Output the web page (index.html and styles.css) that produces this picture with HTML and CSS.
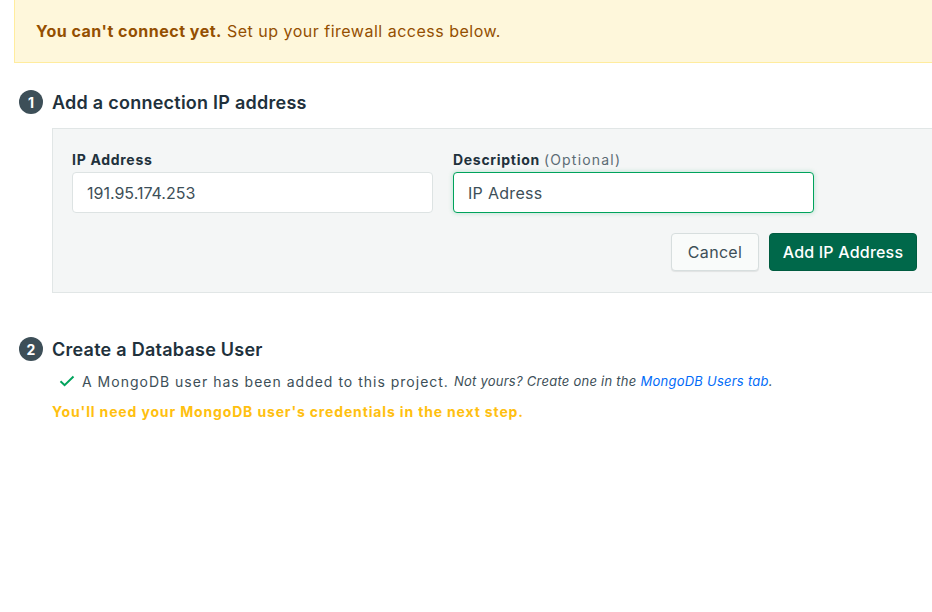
FILE: index.html
```html
<!DOCTYPE html>
<html>
<head>
<meta charset="utf-8">
<link rel="stylesheet" href="styles.css">
</head>
<body>
<div class="page">
  <div class="banner"><strong>You can't connect yet.</strong>&nbsp;Set up your firewall access below.</div>

  <section class="step step-one">
    <h2 class="step-title"><span class="num">1</span>Add a connection IP address</h2>
    <div class="panel">
      <div class="fields">
        <div class="field">
          <label class="label">IP Address</label>
          <div class="input">191.95.174.253</div>
        </div>
        <div class="field">
          <label class="label">Description <span class="opt">(Optional)</span></label>
          <div class="input focused">IP Adress</div>
        </div>
      </div>
      <div class="actions">
        <button class="btn btn-cancel">Cancel</button>
        <button class="btn btn-primary">Add IP Address</button>
      </div>
    </div>
  </section>

  <section class="step step-two">
    <h2 class="step-title"><span class="num">2</span>Create a Database User</h2>
    <p class="check-line">
      <svg class="check" width="16" height="12" viewBox="0 0 16 12"><path d="M1.5 6.2 L5.6 10.2 L14.5 1.5" fill="none" stroke="#00A35C" stroke-width="2"/></svg>
      <span class="check-text">A MongoDB user has been added to this project.</span>
      <em>Not yours? Create one in the <a class="link">MongoDB Users tab</a>.</em>
    </p>
    <p class="warn">You'll need your MongoDB user's credentials in the next step.</p>
  </section>
</div>
</body>
</html>
```

FILE: styles.css
```css
html, body {
  margin: 0;
  padding: 0;
  background: #fff;
  overflow: hidden;
}
body {
  font-family: "Inter", "Noto Sans", sans-serif;
  color: #21313C;
  width: 932px;
  height: 612px;
}
.page {
  width: 960px;
}
.banner {
  margin-left: 14px;
  height: 63px;
  box-sizing: border-box;
  padding: 0 20px 1px 21px;
  display: flex;
  align-items: center;
  background: #FEF7DB;
  border-left: 1px solid #FFEC9E;
  border-bottom: 1px solid #FFEC9E;
  color: #944F01;
  font-size: 16px;
  letter-spacing: 0.5px;
}
.banner strong { font-weight: 700; }

.step-title {
  display: flex;
  align-items: center;
  margin: 0;
  padding-left: 19px;
  height: 24px;
  font-size: 18px;
  font-weight: 600;
  color: #21313C;
  letter-spacing: 0.25px;
}
.num {
  width: 24px;
  height: 24px;
  border-radius: 50%;
  background: #3D4F58;
  color: #fff;
  font-size: 14px;
  font-weight: 700;
  letter-spacing: 0;
  display: flex;
  align-items: center;
  justify-content: center;
  margin-right: 9px;
}
.step-one { margin-top: 27px; }
.panel {
  margin: 14px 0 0 52px;
  width: 884px;
  height: 165px;
  box-sizing: border-box;
  background: #F4F6F6;
  border: 1px solid #E1E6E6;
  padding: 20px 18px 0 19px;
  display: flex;
  flex-direction: column;
}
.fields {
  display: flex;
  gap: 20px;
}
.field {
  display: flex;
  flex-direction: column;
  width: 361px;
}
.label {
  font-size: 14px;
  font-weight: 700;
  color: #21313C;
  line-height: 20px;
  padding-top: 1px;
  margin-bottom: 2px;
  letter-spacing: 0.7px;
}
.opt { font-weight: 400; color: #5C6C75; letter-spacing: 1.2px; }
.input {
  height: 41px;
  box-sizing: border-box;
  background: #fff;
  border: 1px solid #DDE3E3;
  border-radius: 4px;
  padding: 0 14px;
  display: flex;
  align-items: center;
  font-size: 16px;
  color: #3D4F58;
}
.input.focused {
  border-color: #00A35C;
  box-shadow: 0 0 4px 1px rgba(0,163,92,0.18);
  letter-spacing: 0.3px;
}
.actions {
  display: flex;
  justify-content: flex-end;
  gap: 10px;
  margin-top: 20px;
}
.btn {
  height: 38px;
  box-sizing: border-box;
  border-radius: 4px;
  font-family: inherit;
  font-size: 16px;
  padding: 0;
  white-space: nowrap;
}
.btn-cancel {
  width: 88px;
  background: #F9FBFA;
  border: 1px solid #D7DEDE;
  box-shadow: 0 1px 1px rgba(0,0,0,0.08);
  color: #3D4F58;
  letter-spacing: 0.3px;
}
.btn-primary {
  width: 148px;
  background: #00684A;
  border: 1px solid #005C40;
  color: #fff;
  font-weight: 500;
  letter-spacing: 0.2px;
}

.step-two { margin-top: 44px; }
.check-line {
  margin: 10px 0 0 59px;
  display: flex;
  align-items: center;
  font-size: 14px;
  color: #3D4F58;
  height: 20px;
}
.check { margin-right: 7px; }
.check-text { letter-spacing: 1px; }
.check-line em {
  font-size: 13px;
  margin-left: 5px;
  letter-spacing: 0.25px;
}
.link { color: #016BF8; }
.warn {
  margin: 12px 0 0 52px;
  font-size: 14px;
  font-weight: 700;
  color: #FFC010;
  letter-spacing: 0.85px;
}
```
